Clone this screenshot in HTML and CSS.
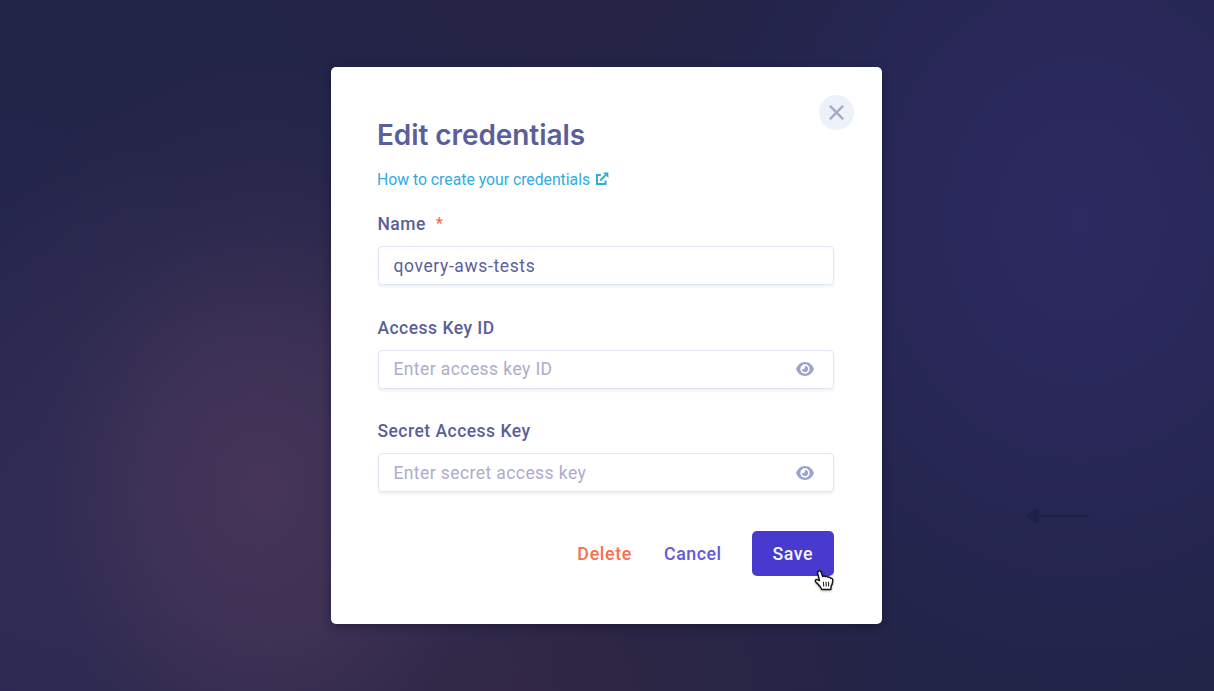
FILE: index.html
```html
<!DOCTYPE html>
<html lang="en">
<head>
<meta charset="utf-8">
<title>Edit credentials</title>
<link rel="stylesheet" href="styles.css">
</head>
<body>
<svg class="backdrop-arrow" viewBox="0 0 66 18"><path d="M1 9 15 1v16z"/><path d="M14 7.800h51v2.400H14z"/></svg>
<main class="modal">
  <button class="close" aria-label="Close"><svg viewBox="0 0 16 16"><path d="M2.300 2.300 13.700 13.700M13.700 2.300 2.300 13.700"/></svg></button>
  <h1 class="title"><span>Edit credentials</span></h1>
  <a class="help"><span>How to create your credentials</span><svg viewBox="0 0 14 14"><path class="box" d="M5.900 2.900H2v9.100h8.600V8.500"/><path class="line" d="M5.200 8.500 11 2.800"/><path class="head" d="M8 .6h5.400V6z"/></svg></a>
  <form class="form">
    <div class="field">
      <div class="label"><span>Name</span><span class="required">*</span></div>
      <div class="input"><span class="value">qovery-aws-tests</span></div>
    </div>
    <div class="field">
      <div class="label"><span>Access Key ID</span></div>
      <div class="input"><span class="placeholder">Enter access key ID</span><svg class="eye" viewBox="0 0 18 14"><path d="M9 0C4.800 0 1.500 2.800 0 7c1.500 4.200 4.800 7 9 7s7.500-2.800 9-7C16.500 2.800 13.200 0 9 0z"/><circle class="iris" cx="9" cy="7" r="4.700"/><path d="M9 3.900a3.100 3.100 0 1 1-3.100 3.100c1.800.8 3.200-.7 3.100-3.100z"/></svg></div>
    </div>
    <div class="field">
      <div class="label"><span>Secret Access Key</span></div>
      <div class="input"><span class="placeholder">Enter secret access key</span><svg class="eye" viewBox="0 0 18 14"><path d="M9 0C4.800 0 1.500 2.800 0 7c1.500 4.200 4.800 7 9 7s7.500-2.800 9-7C16.500 2.800 13.200 0 9 0z"/><circle class="iris" cx="9" cy="7" r="4.700"/><path d="M9 3.900a3.100 3.100 0 1 1-3.100 3.100c1.800.8 3.200-.7 3.100-3.100z"/></svg></div>
    </div>
  </form>
  <footer class="actions">
    <span class="delete">Delete</span><span class="cancel">Cancel</span><span class="save">Save</span>
  </footer>
  <svg class="cursor" viewBox="0 0 20 22"><path d="M5.200 2.100c1-.7 2.100-.2 2.500.8l1.500 4.300c.8-.8 2-.6 2.500.2.8-.7 2-.4 2.500.5 1-.5 2-.1 2.500 1 1.200-.4 2.200.4 2.200 1.700 0 3-.6 4.400-1.600 6l-.3 3H8.400c-1.200-2.900-3.200-4.600-5.600-7-1.200-1.300-.4-2.700 1-2.500l2.400 1-1.800-7c-.2-.9.100-1.600.8-2z"/><path class="folds" d="M9.900 12.200l.3 4.500M12.400 12.200l.2 4.500M14.900 12.200v4.500"/></svg>
</main>
</body>
</html>
```
FILE: styles.css
```css
* { box-sizing: border-box; }
body {
  margin: 0;
  height: 691px;
  overflow: hidden;
  display: flex;
  align-items: flex-start;
  padding: 67px 0 0 331px;
  font-family: Roboto, "Liberation Sans", sans-serif;
  color: #5b5f99;
  background:
    radial-gradient(ellipse 340px 440px at 265px 490px, rgba(72,54,89,.95), rgba(68,53,89,.75) 35%, rgba(56,47,84,.38) 65%, transparent),
    radial-gradient(ellipse 400px 480px at 1080px 220px, #2d2a61, rgba(43,41,94,.7) 45%, transparent),
    radial-gradient(ellipse 420px 260px at 500px 691px, rgba(52,39,66,.85), transparent),
    radial-gradient(ellipse 300px 150px at 550px 0, rgba(38,35,69,.8), transparent),
    radial-gradient(ellipse 300px 480px at 0 560px, #2e2b57, transparent),
    #222448;
}
.modal {
  position: relative;
  width: 551px;
  height: 557px;
  padding: 47px 48px 48px 47px;
  border-radius: 5px;
  background: #fff;
  box-shadow: 0 3px 10px rgba(12,12,38,.4);
  display: flex;
  flex-direction: column;
}
.close {
  position: absolute;
  top: 28px;
  right: 28px;
  width: 35px;
  height: 35px;
  padding: 0;
  border: 0;
  border-radius: 50%;
  background: #edf1f8;
  display: grid;
  place-items: center;
}
.close svg { width: 17px; height: 17px; fill: none; stroke: #a2abca; stroke-width: 2.200; stroke-linecap: round; }
.title {
  margin: 0 0 0 -1px;
  height: 42px;
  font: 600 28px/42px Inter, sans-serif;
  letter-spacing: -.08px;
  white-space: nowrap;
}
.help {
  display: flex;
  align-items: center;
  gap: 5px;
  height: 24px;
  margin: 12px 0 0 -1px;
  font-size: 15.800px;
  letter-spacing: -.02px;
  color: #32abdf;
}
.help svg { width: 14px; height: 14px; margin-top: -2px; }
.help path { fill: none; stroke: #32abdf; stroke-width: 2; }
.help .head { fill: #32abdf; stroke: none; }
.form { display: grid; gap: 28.600px; margin-top: 19px; }
.field { height: 75px; }
.label {
  height: 24px;
  display: flex;
  gap: 10px;
  margin: 0 0 11px -.6px;
  font-weight: 500;
  font-size: 17.500px;
  line-height: 26px;
  letter-spacing: .48px;
}
.required { color: #f36b50; font-size: 16px; }
.input {
  height: 39.300px;
  display: flex;
  align-items: center;
  justify-content: space-between;
  padding: 0 19px 0 14.400px;
  border: 1px solid #e1e6f3;
  border-radius: 4px;
  font-size: 17.500px;
  letter-spacing: .42px;
  box-shadow: 0 2px 3px rgba(40,60,100,.08);
}
.value { letter-spacing: .62px; }
.placeholder { color: #aeaccb; }
.eye { width: 18px; height: 14px; fill: #9ba3d0; }
.iris { fill: #fff; }
.actions {
  display: flex;
  align-items: center;
  justify-content: flex-end;
  height: 45px;
  margin-top: 38px;
  font-weight: 500;
  font-size: 17.800px;
  letter-spacing: .5px;
}
.delete { color: #f8704f; margin-right: 32px; letter-spacing: .68px; }
.cancel { color: #6459d8; margin-right: 30px; }
.save {
  width: 82.500px;
  height: 44.500px;
  border-radius: 5px;
  background: #483ace;
  color: #f4f3ff;
  line-height: 45px;
  text-align: center;
}
.cursor {
  position: absolute;
  left: 482px;
  top: 502px;
  width: 21px;
  height: 23px;
  fill: #fff;
  stroke: #151515;
  stroke-width: 1.400;
  stroke-linejoin: round;
  filter: drop-shadow(0 1px 1px rgba(0,0,0,.25));
}
.cursor .folds { stroke-width: 1; }
.backdrop-arrow {
  position: absolute;
  left: 1024px;
  top: 507px;
  width: 66px;
  height: 18px;
  fill: #202146;
}
```
